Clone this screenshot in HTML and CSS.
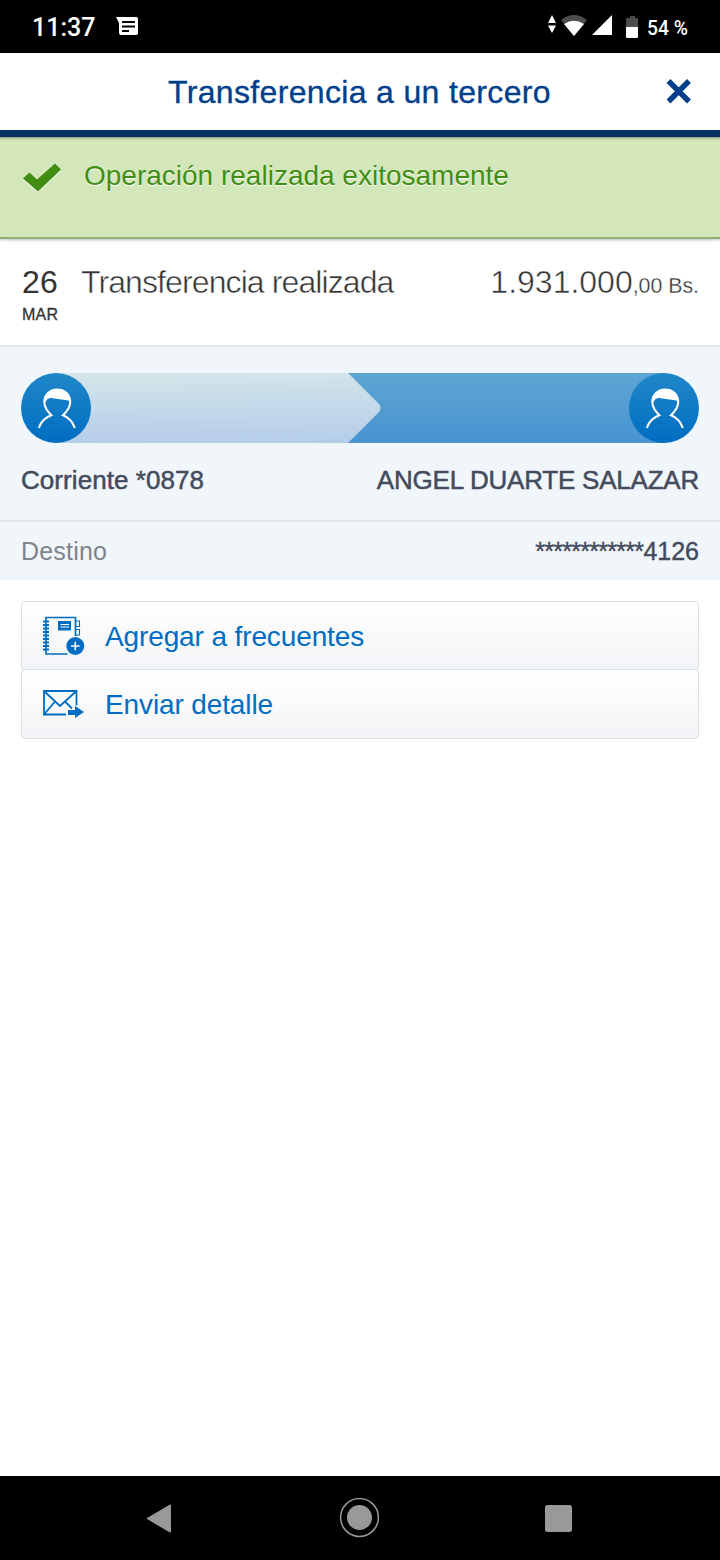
FILE: index.html
```html
<!DOCTYPE html>
<html lang="es">
<head>
<meta charset="utf-8">
<title>Transferencia a un tercero</title>
<link rel="stylesheet" href="styles.css">
</head>
<body>
<div class="status-bar">
  <span class="clock">11:37</span>
  <svg class="message-icon" width="22" height="19" viewBox="0 0 22 19"><path d="M0 0H20Q22 0 22 2V16Q22 18 20 18H5Q3 18 3 16V6Z" fill="#fff"/><path d="M6 5H19M6 9.500H19M6 14H13" stroke="#000" stroke-width="2"/></svg>
  <svg class="signal-icons" width="92" height="24" viewBox="0 0 92 24">
    <path d="M0 8L4 0L8 8ZM0 10.500H8L4 18Z" fill="#fff"/>
    <path d="M13 5Q26-5 39 5L26 21Z" fill="#4d4d4d"/>
    <path d="M16 9Q26 2.500 36 9L26 21Z" fill="#fff"/>
    <path d="M64 0V20H44Z" fill="#fff"/>
    <path d="M78 12V4Q78 3 79 3H82V1H87V3H89Q90 3 90 4V12Z" fill="#4d4d4d"/>
    <path d="M78 12H90V22Q90 23 89 23H79Q78 23 78 22Z" fill="#fff"/>
  </svg>
  <span class="battery">54 %</span>
</div>
<header class="title-bar">
  <h1 class="title">Transferencia a un tercero</h1>
  <svg class="close" width="26" height="26" viewBox="0 0 26 26"><path d="M2.500 2L23 22.500M23 2L2.500 22.500" stroke="#00408b" stroke-width="5.400"/></svg>
</header>
<div class="success">
  <svg class="check" width="40" height="32" viewBox="0 0 40 32"><path d="M1 17L7.500 11L15 18L32 2L39 8L16 30Z" fill="#fff" opacity=".65"/><path d="M1 15.500L7.500 9.500L15 16.500L33 .5L39 6.500L16 28.500Z" fill="#418d14"/></svg>
  <span>Operación realizada exitosamente</span>
</div>
<section class="summary">
  <div class="date"><span class="day">26</span><span class="month">MAR</span></div>
  <span class="concept">Transferencia realizada</span>
  <span class="amount">1.931.000<span class="decimals">,00 Bs.</span></span>
</section>
<section class="parties">
  <svg width="678" height="70" viewBox="0 0 678 70">
    <defs>
      <linearGradient id="target" x2="0" y2="1"><stop stop-color="#5ea5d4"/><stop offset="1" stop-color="#4894d0"/></linearGradient>
      <linearGradient id="source" x1="0" y1="0" x2=".04" y2="1"><stop stop-color="#d3e6e9"/><stop offset="1" stop-color="#b6cdea"/></linearGradient>
      <linearGradient id="disc" x2="0" y2="1"><stop stop-color="#2087c8"/><stop offset="1" stop-color="#006dc2"/></linearGradient>
      <g id="person">
        <circle cx="35" cy="35" r="35" fill="url(#disc)"/>
        <path d="M17.800 55Q21 45.500 30.300 42.300C26 38 23.300 34 23.300 29C23.300 12.500 49.200 12.500 49.200 29C49.200 34 46.500 38 42 42.300Q50.500 45.500 53.800 55" fill="none" stroke="#fff" stroke-width="2.100"/>
        <path d="M23.300 29C23.300 12.500 49.200 12.500 49.200 29L47.500 27.600L30 25Q26 25 24.500 29Z" fill="#fff"/>
      </g>
    </defs>
    <rect x="300" width="343" height="70" fill="url(#target)"/>
    <path d="M35 0H327L358 31Q361 35 358 39L327 70H35Z" fill="url(#source)"/>
    <use href="#person"/><use href="#person" x="608"/>
  </svg>
  <div class="names"><span class="origin">Corriente *0878</span><span class="recipient">ANGEL DUARTE SALAZAR</span></div>
</section>
<section class="destination">
  <span>Destino</span>
  <span class="account"><span class="mask">************</span>4126</span>
</section>
<nav class="actions">
  <a class="action">
    <svg width="42" height="40" viewBox="0 1 42 40" fill="none" stroke="#006dc2" stroke-width="1.700">
      <path d="M24.500 39H3V2.500H32.500V21"/>
      <path d="M0 6.500H6M0 10H6M0 13.500H6M0 17H6M0 20.500H6M0 24H6M0 27.500H6M0 31H6M0 34.500H6" stroke-width="1.900"/>
      <path d="M33 6H36.500V11.500H33M33 14.500H36.500V20H33" stroke-width="1.100"/>
      <path d="M15 6H28V15.500H15Z" fill="#006dc2" stroke="none"/><path d="M17.500 9.500H26M17.500 12H26" stroke="#fff" stroke-width="1.100"/>
      <circle cx="32.300" cy="31" r="9" fill="#006dc2" stroke="none"/><path d="M28 31H36.600M32.300 26.700V35.300" stroke="#fff" stroke-width="1.600"/>
    </svg>
    <span>Agregar a frecuentes</span>
  </a>
  <a class="action">
    <svg width="42" height="40" viewBox="0 1 42 40" fill="none" stroke="#006dc2" stroke-width="1.800">
      <path d="M23 31.500H1V8H33.500V22.500M1 8L17 23L33.500 8M1 31.500L12 18.500M22 18.500L29 25.500"/>
      <path d="M25 27H32V23L41 29L32 35V32H25Z" fill="#006dc2" stroke="none"/>
    </svg>
    <span>Enviar detalle</span>
  </a>
</nav>
<div class="nav-bar">
  <svg width="26" height="30" viewBox="0 0 26 30"><path d="M24 2.500V28.500L2 15.500Z" fill="#999" stroke="#999" stroke-width="2" stroke-linejoin="round"/></svg>
  <svg width="40" height="40" viewBox="0 0 40 40"><circle cx="20.500" cy="19.500" r="18.900" fill="none" stroke="#999" stroke-width="1.500"/><circle cx="20.500" cy="19.500" r="12.500" fill="#999"/></svg>
  <svg width="27" height="27" viewBox="0 0 27 27"><rect width="27" height="27" rx="2.500" fill="#999"/></svg>
</div>
</body>
</html>
```
FILE: styles.css
```css
* { box-sizing: border-box; }
body { margin: 0; height: 1560px; display: flex; flex-direction: column; background: #fff; font-family: "Liberation Sans", Arial, sans-serif; white-space: nowrap; }
svg { display: block; flex: none; }

.status-bar { height: 53px; display: flex; align-items: flex-start; background: #000; color: #fff; font-family: Roboto, sans-serif; font-weight: 500; padding-left: 32px; }
.clock { width: 84px; font-size: 25px; line-height: 30px; padding-top: 13px; }
.message-icon { margin-top: 17px; }
.signal-icons { margin: 15px 0 0 410px; }
.battery { margin-left: 7px; padding-top: 17px; font-size: 19.3px; line-height: 24px; }

.title-bar { height: 84px; display: flex; align-items: center; background: #fff; border-bottom: 7px solid #043263; padding: 0 28px 0 168px; justify-content: space-between; }
.title { margin: 0; color: #00408b; font-size: 32px; font-weight: 400; line-height: 40px; letter-spacing: .34px; -webkit-text-stroke: .35px #00408b; }

.success { height: 102px; display: flex; gap: 22px; background: linear-gradient(#8a9d78, #c3d5aa 2px, #d4e7ba 4px); border-bottom: 2px solid #8fb06e; box-shadow: 0 1px 3px #0004; padding: 22px; color: #418d14; font-size: 28px; line-height: 34px; text-shadow: 0 1px 1px #fff; }
.check { margin-top: 4px; }

.summary { height: 108px; display: flex; align-items: flex-start; border-bottom: 2px solid #e3e5e7; color: #333; padding: 24px 21px 0; font-size: 32px; line-height: 38px; }
.date { display: flex; flex-direction: column; width: 60px; padding-left: 1px; }
.day { letter-spacing: .3px; }
.month { padding-top: 2px; font-size: 16px; line-height: 24px; letter-spacing: .2px; -webkit-text-stroke: .3px #333; }
.concept { letter-spacing: -.9px; -webkit-text-stroke: .5px #fff; }
.amount { margin-left: auto; -webkit-text-stroke: .5px #fff; }
.decimals { font-size: 21.3px; -webkit-text-stroke: .3px #fff; }

.parties { height: 175px; padding: 26px 21px 0; background: #f1f6fb; border-bottom: 2px solid #e2e4e6; }
.names { display: flex; justify-content: space-between; margin-top: 20px; color: #434b5c; font-size: 26px; line-height: 34px; -webkit-text-stroke: .5px #434b5c; }
.origin { letter-spacing: .06px; }
.recipient { letter-spacing: -.22px; }

.destination { height: 58px; display: flex; justify-content: space-between; align-items: center; background: #f1f6fb; padding: 0 21px; color: #808389; font-size: 25px; letter-spacing: .2px; }
.account { color: #434b5c; letter-spacing: 0; -webkit-text-stroke: .4px #434b5c; }
.mask { letter-spacing: -.72px; }

.actions { display: flex; flex-direction: column; margin: 21px 21px 0; }
.action { height: 69px; display: flex; align-items: center; gap: 21px; border: 1px solid #d4e2e8; border-radius: 4px; background: linear-gradient(#fff, #f3f4f7); padding: 2px 0 0 20px; color: #006dc2; font-size: 28px; letter-spacing: -.12px; }
.action svg { margin: -2px -1px 0 1px; }
.action + .action { height: 70px; margin-top: -1px; }

.nav-bar { height: 84px; margin-top: auto; display: flex; align-items: center; justify-content: space-between; padding: 0 148px 0 146px; background: #000; }
```
